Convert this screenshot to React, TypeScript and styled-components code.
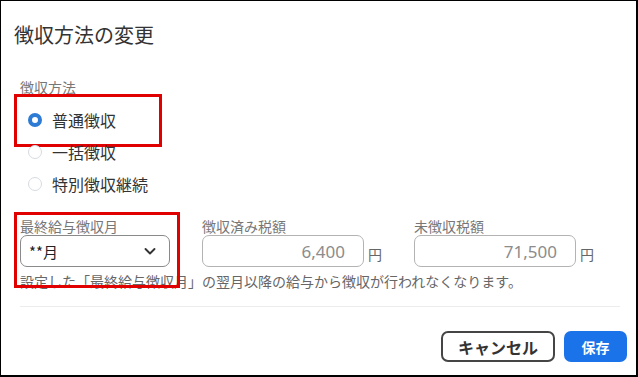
import styled, { createGlobalStyle } from "styled-components";

const GlobalStyle = createGlobalStyle`
  * {
    box-sizing: border-box;
  }

  body {
    margin: 0;
    background: #fff;
    font-family: "Noto Sans CJK JP", "Noto Sans", sans-serif;
  }
`;

const methods = [
  { id: "normal", label: "普通徴収" },
  { id: "lump", label: "一括徴収" },
  { id: "special", label: "特別徴収継続" },
];

export default function App() {
  const selected = "normal";

  return (
    <>
      <GlobalStyle />
      <Frame>
        <Title>徴収方法の変更</Title>

        <Body>
          <FieldLabel>徴収方法</FieldLabel>
          <RadioList>
            {methods.map((m) => (
              <RadioRow key={m.id} $highlight={m.id === selected}>
                <RadioDot $checked={m.id === selected} />
                <RadioText>{m.label}</RadioText>
              </RadioRow>
            ))}
          </RadioList>

          <FieldsRow>
            <MonthField>
              <SmallLabel>最終給与徴収月</SmallLabel>
              <Select>
                <span>**月</span>
                <svg width="14" height="14" viewBox="0 0 14 14">
                  <polyline
                    points="2.5,5 7,9.5 11.5,5"
                    fill="none"
                    stroke="#333"
                    strokeWidth="1.9"
                    strokeLinecap="round"
                    strokeLinejoin="round"
                  />
                </svg>
              </Select>
            </MonthField>

            <AmountField>
              <SmallLabel>徴収済み税額</SmallLabel>
              <InputLine>
                <AmountBox>6,400</AmountBox>
                <Unit>円</Unit>
              </InputLine>
            </AmountField>

            <AmountField>
              <SmallLabel>未徴収税額</SmallLabel>
              <InputLine>
                <AmountBox>71,500</AmountBox>
                <Unit>円</Unit>
              </InputLine>
            </AmountField>
          </FieldsRow>

          <Note>
            設定した「最終給与徴収月」の翌月以降の給与から徴収が行われなくなります。
          </Note>

          <Divider />
        </Body>

        <Footer>
          <CancelButton>キャンセル</CancelButton>
          <SaveButton>保存</SaveButton>
        </Footer>
      </Frame>
    </>
  );
}

const Frame = styled.div`
  display: flex;
  flex-direction: column;

  width: 638px;
  height: 377px;

  border: 1px solid #000;
  border-right-width: 2px;
  border-bottom-width: 2px;

  background: #fff;
  overflow: hidden;
`;

const Title = styled.div`
  margin-top: 20px;
  padding-left: 13px;

  height: 28px;
  line-height: 28px;

  color: #333;
  font-size: 20px;
  letter-spacing: 0;
`;

const Body = styled.div`
  display: flex;
  flex-direction: column;

  margin-top: 28px;
  padding-left: 19px;
  padding-right: 16px;
`;

const FieldLabel = styled.div`
  height: 20px;
  line-height: 20px;

  color: #777;
  font-size: 14px;
`;

const RadioList = styled.div`
  display: flex;
  flex-direction: column;

  margin-top: 7px;
`;

const RadioRow = styled.div<{ $highlight?: boolean }>`
  position: relative;

  display: flex;
  align-items: center;
  gap: 10px;

  height: 32px;
  padding-left: 8px;

  ${({ $highlight }) =>
    $highlight &&
    `
    &::after {
      content: "";
      position: absolute;
      top: -10px;
      left: -6px;
      width: 142px;
      height: 47px;
      border: 3px solid #e00000;
      pointer-events: none;
    }
  `}
`;

const RadioDot = styled.span<{ $checked?: boolean }>`
  display: inline-block;
  flex: none;

  width: 14px;
  height: 14px;

  border-radius: 50%;
  border: ${({ $checked }) =>
    $checked ? "4px solid #2d7bd4" : "1px solid #d6dbe3"};

  background: #fff;
`;

const RadioText = styled.span`
  color: #333;
  font-size: 16px;
  line-height: 20px;
`;

const FieldsRow = styled.div`
  display: flex;
  align-items: flex-start;
  gap: 32px;

  margin-top: 17px;
`;

const MonthField = styled.div`
  position: relative;

  display: flex;
  flex-direction: column;

  width: 150px;

  &::after {
    content: "";
    position: absolute;
    top: -5px;
    left: -6px;
    width: 160px;
    height: 70px;
    border: 3px solid #e00000;
    pointer-events: none;
  }
`;

const AmountField = styled.div`
  display: flex;
  flex-direction: column;
`;

const SmallLabel = styled.div`
  height: 18px;
  line-height: 18px;

  color: #777;
  font-size: 14px;
`;

const Select = styled.div`
  display: flex;
  align-items: center;
  justify-content: space-between;

  width: 150px;
  height: 32px;

  padding-left: 8px;
  padding-right: 12px;

  border: 1px solid #8a8a8a;
  border-radius: 7px;

  color: #222;
  font-size: 15px;

  svg {
    display: block;
  }
`;

const InputLine = styled.div`
  display: flex;
  align-items: center;
  gap: 4px;
`;

const AmountBox = styled.div`
  display: flex;
  align-items: center;
  justify-content: flex-end;

  width: 162px;
  height: 32px;

  padding-right: 18px;

  border: 1px solid #b3b3b3;
  border-radius: 7px;

  color: #8c8c8c;
  font-family: "Noto Sans", sans-serif;
  font-size: 17px;
`;

const Unit = styled.span`
  padding-top: 5px;

  color: #666;
  font-size: 14px;
`;

const Note = styled.div`
  margin-top: 4px;

  height: 20px;
  line-height: 20px;

  color: #666;
  font-size: 14px;
  white-space: nowrap;
`;

const Divider = styled.div`
  margin-top: 15px;

  height: 1px;
  background: #ececec;
`;

const Footer = styled.div`
  display: flex;
  justify-content: flex-end;
  gap: 9px;

  margin-top: 24px;
  padding-right: 9px;
`;

const CancelButton = styled.button`
  display: flex;
  align-items: center;
  justify-content: center;

  width: 114px;
  height: 31px;

  border: 2px solid #454545;
  border-radius: 7px;

  background: #fff;

  color: #333;
  font-family: inherit;
  font-size: 16px;
  font-weight: 700;
`;

const SaveButton = styled.button`
  display: flex;
  align-items: center;
  justify-content: center;

  width: 63px;
  height: 31px;

  border: none;
  border-radius: 7px;

  background: #1a73e8;

  color: #fff;
  font-family: inherit;
  font-size: 14px;
  font-weight: 700;
`;
